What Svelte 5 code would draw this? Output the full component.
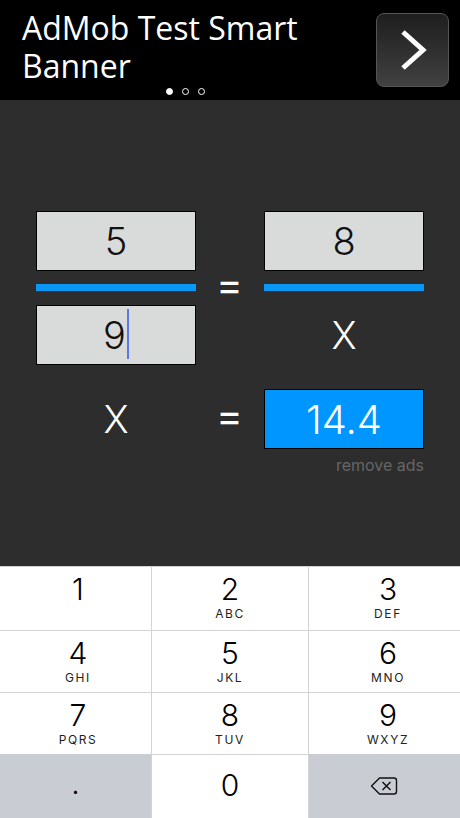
<script>
  const keys = [
    { n: '1', l: '' },
    { n: '2', l: 'ABC' },
    { n: '3', l: 'DEF' },
    { n: '4', l: 'GHI' },
    { n: '5', l: 'JKL' },
    { n: '6', l: 'MNO' },
    { n: '7', l: 'PQRS' },
    { n: '8', l: 'TUV' },
    { n: '9', l: 'WXYZ' }
  ];
</script>

<div class="screen">
  <header class="banner">
    <p class="ad-title">AdMob Test Smart Banner</p>
    <div class="ad-btn">
      <svg width="30" height="42" viewBox="0 0 30 42">
        <path d="M5 3 L25 21 L5 39" fill="none" stroke="#fff" stroke-width="5" />
      </svg>
    </div>
    <div class="dots">
      <span class="dot on"></span>
      <span class="dot"></span>
      <span class="dot"></span>
    </div>
  </header>

  <main class="calc">
    <div class="grid">
      <div class="fraction">
        <div class="field">5</div>
        <div class="rule"></div>
        <div class="field">9<span class="caret"></span></div>
      </div>
      <div class="eq">=</div>
      <div class="fraction">
        <div class="field">8</div>
        <div class="rule"></div>
        <div class="x-cell">X</div>
      </div>

      <div class="x-cell result-x">X</div>
      <div class="eq">=</div>
      <div class="field answer">14.4</div>

      <div class="remove">remove ads</div>
    </div>
  </main>

  <section class="keyboard">
    {#each keys as k}
      <div class="key">
        <span class="num">{k.n}</span>
        {#if k.l}<span class="letters">{k.l}</span>{/if}
      </div>
    {/each}
    <div class="key alt"><span class="dot-key">.</span></div>
    <div class="key"><span class="num solo">0</span></div>
    <div class="key alt">
      <svg class="backspace" width="28" height="20" viewBox="0 0 28 20">
        <path d="M9.5 2 H24 a2.5 2.5 0 0 1 2.5 2.5 V15.5 A2.5 2.5 0 0 1 24 18 H9.5 L1.5 10 Z" fill="none" stroke="#111" stroke-width="1.4" stroke-linejoin="round" />
        <path d="M12.5 6 L20.5 14 M20.5 6 L12.5 14" fill="none" stroke="#111" stroke-width="1.5" />
      </svg>
    </div>
  </section>
</div>

<style>
  :global(body) {
    margin: 0;
    background: #2d2d2d;
  }

  .screen {
    width: 460px;
    height: 818px;
    display: flex;
    flex-direction: column;
    overflow: hidden;
    font-family: Inter, "Liberation Sans", sans-serif;
  }

  .banner {
    height: 100px;
    flex-shrink: 0;
    background: #000;
    position: relative;
    display: flex;
    justify-content: space-between;
    padding: 9px 11px 0 22px;
    box-sizing: border-box;
  }

  .ad-title {
    margin: 0;
    width: 310px;
    color: #fff;
    font-family: "Open Sans", sans-serif;
    font-size: 32px;
    line-height: 38px;
  }

  .ad-btn {
    width: 73px;
    height: 74px;
    margin-top: 4px;
    box-sizing: border-box;
    border: 1px solid #555;
    border-radius: 8px;
    background: linear-gradient(180deg, #1e1e1e, #414141);
    display: flex;
    align-items: center;
    justify-content: center;
  }

  .dots {
    position: absolute;
    left: 166px;
    top: 88px;
    display: flex;
    gap: 9px;
  }

  .dot {
    width: 7px;
    height: 7px;
    box-sizing: border-box;
    border: 1px solid #fff;
    border-radius: 50%;
  }

  .dot.on {
    background: #fff;
  }

  .calc {
    flex: 1;
    background: #2d2d2d;
    padding: 111px 36px 0;
    box-sizing: border-box;
  }

  .grid {
    display: grid;
    grid-template-columns: 160px 68px 160px;
    row-gap: 24px;
    align-items: center;
  }

  .fraction {
    display: flex;
    flex-direction: column;
  }

  .field {
    height: 60px;
    box-sizing: border-box;
    border: 1px solid #000;
    background: #d9dbdb;
    color: #111;
    font-size: 38px;
    font-weight: 350;
    display: flex;
    align-items: center;
    justify-content: center;
    position: relative;
  }

  .caret {
    width: 2px;
    height: 50px;
    margin: 0 0 3px 1px;
    background: #5a78e6;
  }

  .rule {
    height: 7px;
    background: #0a96f5;
    margin: 13px 0 14px;
  }

  .x-cell {
    height: 60px;
    color: #fff;
    font-size: 38px;
    font-weight: 350;
    display: flex;
    align-items: center;
    justify-content: center;
  }

  .eq {
    color: #fff;
    font-size: 40px;
    text-align: center;
    line-height: 40px;
    padding-bottom: 7px;
    margin-right: 1px;
  }

  .answer {
    background: #0096ff;
    color: #fff;
    font-size: 40px;
  }

  .remove {
    grid-column: 1 / 4;
    margin-top: -18px;
    text-align: right;
    color: #666;
    font-size: 16px;
    line-height: 20px;
  }

  .keyboard {
    height: 252px;
    flex-shrink: 0;
    display: grid;
    grid-template-columns: 152px 157px 151px;
    grid-template-rows: 64px 62px 62px 64px;
    background: #fff;
  }

  .key {
    box-sizing: border-box;
    background: #fff;
    border-top: 1px solid #d2d3d5;
    border-right: 1px solid #d2d3d5;
    display: flex;
    flex-direction: column;
    align-items: center;
    color: #000;
  }

  .key:nth-child(3n) {
    border-right: 0;
    padding-left: 7px;
  }

  .key:nth-child(3n + 1) {
    padding-left: 5px;
  }

  .key.alt {
    background: #c9ccd2;
    justify-content: center;
    border-top: 0;
    padding-left: 0;
  }

  .backspace {
    margin-right: 2px;
  }

  .num {
    font-size: 30px;
    font-weight: 300;
    line-height: 36px;
    margin-top: 4px;
  }

  .num.solo {
    margin-top: 12px;
  }

  .letters {
    margin-top: 1px;
    font-size: 12px;
    line-height: 12px;
    letter-spacing: 1.6px;
    color: #222;
  }

  .dot-key {
    font-size: 24px;
    line-height: 30px;
  }
</style>
